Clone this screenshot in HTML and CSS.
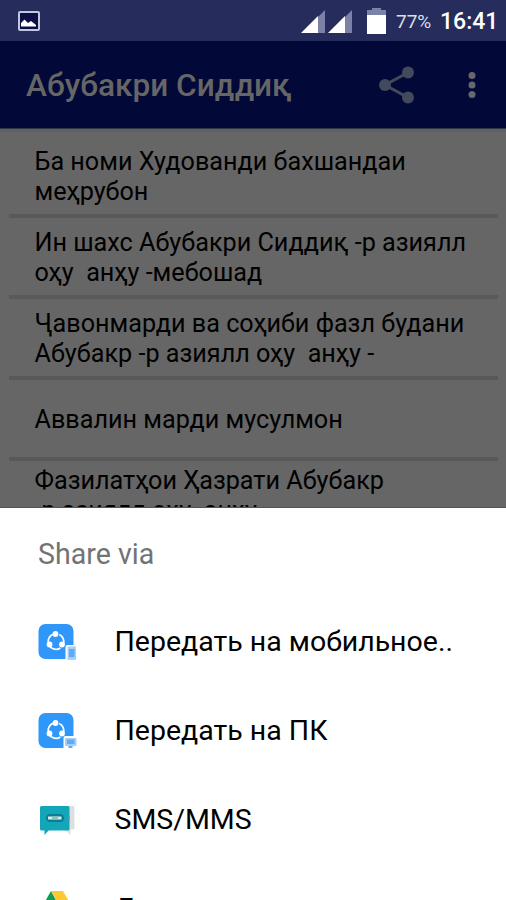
FILE: index.html
```html
<!DOCTYPE html>
<html lang="tg">
<head>
    <meta charset="UTF-8">
    <meta name="viewport" content="width=device-width, initial-scale=1.0">
    <title>Абубакри Сиддиқ</title>
    <link rel="stylesheet" href="styles.css">
</head>
<body>

    <div class="screen">
        <div class="status-bar">
            <svg class="picture-icon" width="22" height="20" viewBox="0 0 22 20">
                <rect x="1" y="1" width="20" height="18" rx="1" fill="#0b1148" stroke="#c3c7dc" stroke-width="2"/>
                <path d="M3 15.500V12l3.500-3.500L10 12l3-2 5 4v1.500z" fill="#fff"/>
            </svg>
            <svg class="signal-icon" width="24" height="24" viewBox="0 0 24 24">
                <path d="M17 7L24 0V23H17z" fill="#7c81a6"/>
                <path d="M0 23L17 6V23z" fill="#fff"/>
            </svg>
            <svg class="signal-icon" width="24" height="24" viewBox="0 0 24 24">
                <path d="M17 7L24 0V23H17z" fill="#7c81a6"/>
                <path d="M0 23L17 6V23z" fill="#fff"/>
            </svg>
            <svg class="battery-icon" width="19" height="26" viewBox="0 0 19 26">
                <path d="M5 0h9v2h5v5H0V2h5z" fill="#7c81a6"/>
                <path d="M0 7h19v19H0z" fill="#fff"/>
            </svg>
            <span class="battery-level">77%</span>
            <span class="clock">16:41</span>
        </div>

        <header class="toolbar">
            <h1>Абубакри Сиддиқ</h1>
            <svg class="share-icon" width="36" height="38" viewBox="0 0 36 38">
                <path d="M29 6.500L6 19l23 12.500" fill="none" stroke="#444a5e" stroke-width="3"/>
                <circle cx="29" cy="6.500" r="6" fill="#444a5e"/>
                <circle cx="6" cy="19" r="6" fill="#444a5e"/>
                <circle cx="29" cy="31.500" r="6" fill="#444a5e"/>
            </svg>
            <svg class="more-icon" width="8" height="28" viewBox="0 0 8 28">
                <circle cx="4" cy="4.500" r="3.500" fill="#686868"/>
                <circle cx="4" cy="14" r="3.500" fill="#686868"/>
                <circle cx="4" cy="23.500" r="3.500" fill="#686868"/>
            </svg>
        </header>

        <div class="chapters">
            <div class="chapter">Ба номи Худованди бахшандаи<br>меҳрубон</div>
            <div class="chapter">Ин шахс Абубакри Сиддиқ -р азиялл<br>оҳу  анҳу -мебошад</div>
            <div class="chapter">Ҷавонмарди ва соҳиби фазл будани<br>Абубакр -р азиялл оҳу  анҳу -</div>
            <div class="chapter">Аввалин марди мусулмон</div>
            <div class="chapter tall">Фазилатҳои Ҳазрати Абубакр<br>-р азиялл оҳу  анҳу -</div>
        </div>

        <div class="share-sheet">
            <h2>Share via</h2>
            <div class="share-item">
                <svg width="40" height="38" viewBox="0 0 40 38">
                    <rect x="0.500" y="1" width="35" height="35" rx="7" fill="#2f96fa"/>
                    <circle cx="18" cy="18.500" r="7.800" fill="none" stroke="#fff" stroke-width="1.700" stroke-dasharray="11 5.340" transform="rotate(-65 18 18.500)"/>
                    <circle cx="17.500" cy="11" r="2.900" fill="#fff"/>
                    <circle cx="11.500" cy="21.500" r="2.900" fill="#fff"/>
                    <circle cx="24" cy="21.500" r="2.900" fill="#fff"/>
                    <path d="M27.500 38V24q0-2 2-2h8q2 0 2 2v14z" fill="#fff"/>
                    <rect x="29.500" y="23.500" width="8.500" height="13.500" rx="1" fill="#a5d0fb"/>
                    <rect x="31" y="26" width="5.500" height="8" fill="#5dacf7"/>
                </svg>
                <span>Передать на мобильное..</span>
            </div>
            <div class="share-item">
                <svg width="40" height="38" viewBox="0 0 40 38">
                    <rect x="0.500" y="1" width="35" height="35" rx="7" fill="#2f96fa"/>
                    <circle cx="18" cy="18.500" r="7.800" fill="none" stroke="#fff" stroke-width="1.700" stroke-dasharray="11 5.340" transform="rotate(-65 18 18.500)"/>
                    <circle cx="17.500" cy="11" r="2.900" fill="#fff"/>
                    <circle cx="11.500" cy="21.500" r="2.900" fill="#fff"/>
                    <circle cx="24" cy="21.500" r="2.900" fill="#fff"/>
                    <path d="M25.500 38V26q0-2 2-2h10q2 0 2 2v12z" fill="#fff"/>
                    <rect x="27" y="26" width="11.500" height="8" rx="1" fill="#a5d0fb"/>
                    <rect x="29" y="27.500" width="7.500" height="4.500" fill="#5dacf7"/>
                    <path d="M30.500 34h4v2h-4z" fill="#5dacf7"/>
                </svg>
                <span>Передать на ПК</span>
            </div>
            <div class="share-item">
                <svg width="40" height="38" viewBox="0 0 40 38">
                    <path d="M8 5h27q1.500 0 1.500 1.500V27q0 1.500-1.500 1.500h-2.500V34L27 29H8z" fill="#dedfe0"/>
                    <path d="M3.500 5H30q1.500 0 1.500 1.500V28q0 1.500-1.500 1.500H10.500L6.500 34v-4.500h-3Q2 29.500 2 28V6.500Q2 5 3.500 5z" fill="#13a5b8"/>
                    <rect x="8" y="13" width="18" height="8" rx="4" fill="#087f94"/>
                    <rect x="10" y="15.500" width="13.500" height="3" fill="#dceced"/>
                    <rect x="14" y="15.500" width="6" height="3" fill="#8dc4b0"/>
                    <path d="M32 15v4l-3-2z" fill="#78979d"/>
                </svg>
                <span>SMS/MMS</span>
            </div>
            <div class="share-item">
                <svg width="40" height="38" viewBox="0 0 40 38">
                    <path d="M13 1L1 22l6 11 12-21z" fill="#159b58"/>
                    <path d="M13 1h12l12 21H25z" fill="#fcc934"/>
                    <path d="M7 33l6-11h24l-6 11z" fill="#4285f4"/>
                </svg>
                <span>Диск</span>
            </div>
        </div>
    </div>

</body>
</html>
```
FILE: styles.css
```css
* {
    box-sizing: border-box;
}
body {
    margin: 0;
    font-family: Roboto, "Noto Sans", sans-serif;
    color: #000;
}
.screen {
    display: flex;
    flex-direction: column;
    width: 506px;
    height: 900px;
    overflow: hidden;
    background: #666;
}
.status-bar {
    display: flex;
    flex: none;
    align-items: center;
    height: 41px;
    padding: 0 10px 0 18px;
    background: #262d5c;
    color: #fff;
}
.picture-icon {
    margin-right: auto;
}
.signal-icon {
    margin: 2px 2px 0 1px;
}
.battery-icon {
    margin: 0 10px 0 13px;
}
.battery-level {
    width: 44px;
    padding-top: 1px;
    font-size: 19px;
    color: #dcdeeb;
}
.clock {
    width: 56px;
    padding-top: 1px;
    font-size: 23px;
    font-weight: 500;
    white-space: nowrap;
}
.toolbar {
    display: flex;
    flex: none;
    align-items: center;
    height: 88px;
    padding: 0 30px 0 26px;
    background: #020837;
    border-bottom: 1px solid #303548;
}
.toolbar h1 {
    margin: 2px auto 0 0;
    font-size: 31.6px;
    font-weight: 500;
    color: #666;
}
.share-icon {
    margin-right: 53px;
}
.chapters {
    flex: none;
    height: 379px;
    padding: 5px 8px 0 9px;
    overflow: hidden;
    border-top: 3px solid #5c6165;
    border-bottom: 1px solid #555;
}
.chapter {
    display: flex;
    align-items: center;
    height: 81.1px;
    padding: 2px 0 0 25.5px;
    border-bottom: 4px solid #595959;
    font-size: 25.2px;
    line-height: 29.4px;
    white-space: pre;
}
.chapter.tall {
    align-items: flex-start;
    padding-top: 5px;
}
.share-sheet {
    flex: 1;
    background: #fff;
}
.share-sheet h2 {
    margin: 0;
    padding: 29px 38px 0;
    font-size: 28.6px;
    font-weight: 400;
    line-height: 34px;
    color: #737373;
}
.share-item {
    display: flex;
    align-items: center;
    height: 89px;
    padding-left: 38px;
    font-size: 28.5px;
    white-space: nowrap;
}
.share-item span {
    margin-left: 36.500px;
}
h2 + .share-item {
    margin-top: 26px;
}
```
